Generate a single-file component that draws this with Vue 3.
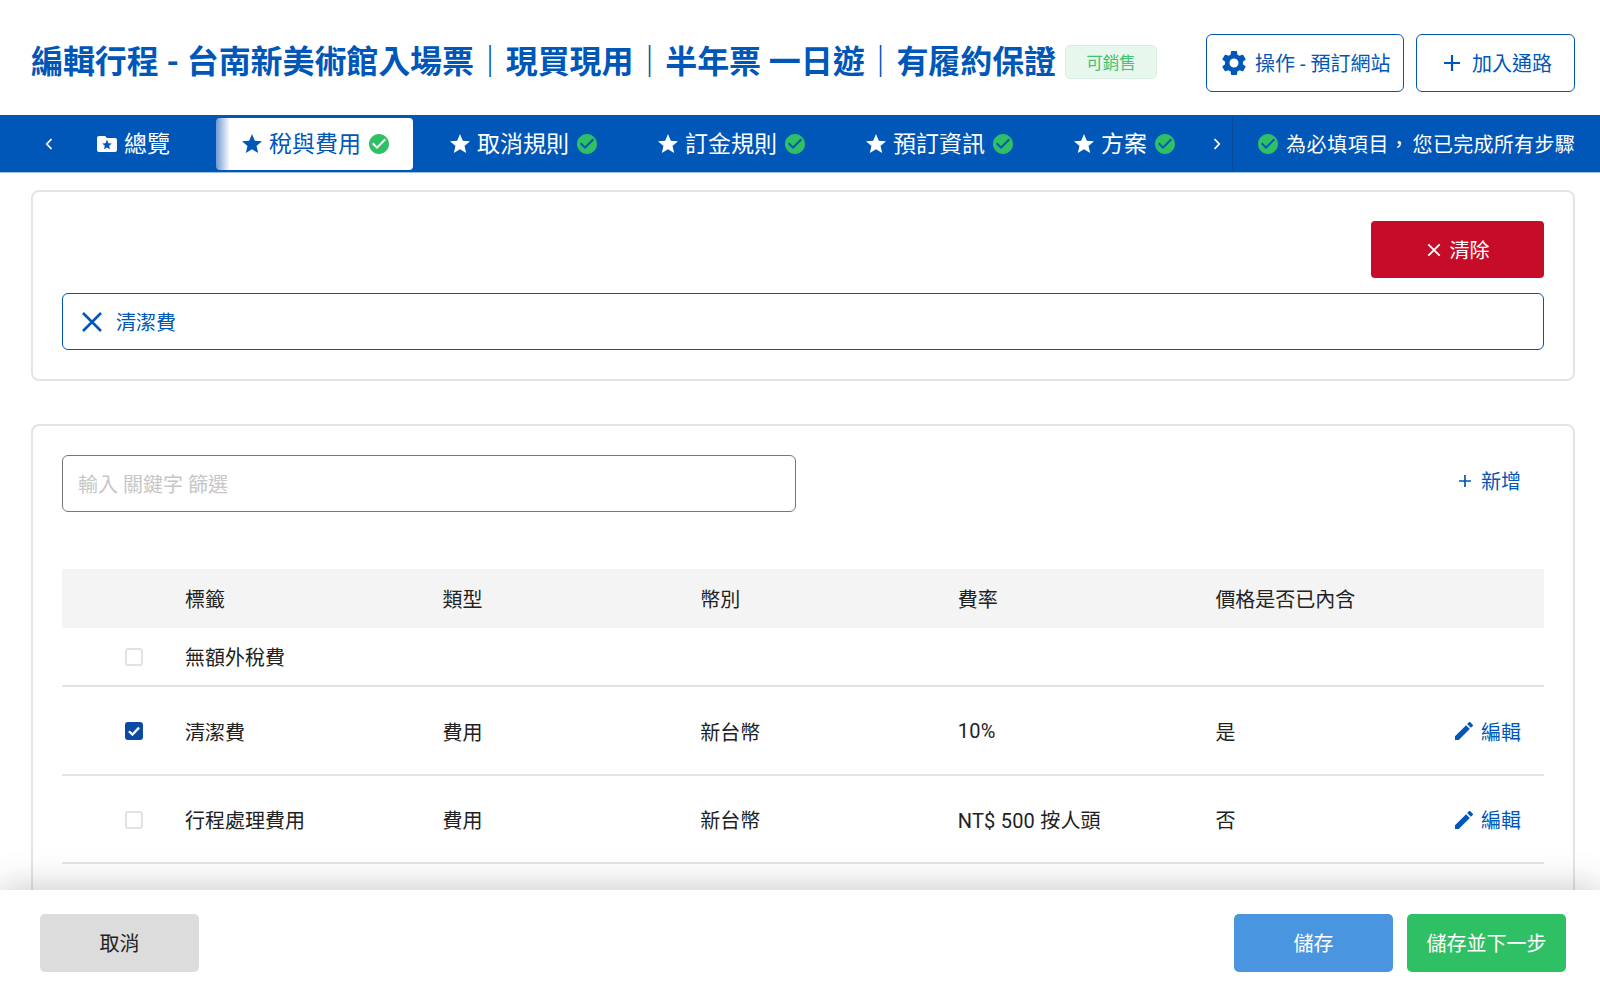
<script setup>
const tabs = ['取消規則', '訂金規則', '預訂資訊', '方案']
const rows = [
  { label: '無額外稅費', type: '', cur: '', rate: '', inc: '', checked: false, edit: false },
  { label: '清潔費', type: '費用', cur: '新台幣', rate: '10%', inc: '是', checked: true, edit: true },
  { label: '行程處理費用', type: '費用', cur: '新台幣', rate: 'NT$ 500 按人頭', inc: '否', checked: false, edit: true },
]
const star = 'M12 17.27 18.18 21l-1.64-7.03L22 9.24l-7.19-.61L12 2 9.19 8.63 2 9.24l5.46 4.73L5.82 21z'
const check = 'M12 2C6.48 2 2 6.48 2 12s4.48 10 10 10 10-4.48 10-10S17.52 2 12 2zm-2 15l-5-5 1.41-1.41L10 14.17l7.59-7.59L19 8l-9 9z'
const pencil = 'M3 17.25V21h3.75L17.81 9.94l-3.75-3.75L3 17.25zM20.71 7.04a1 1 0 0 0 0-1.41l-2.34-2.34a1 1 0 0 0-1.41 0l-1.83 1.83 3.75 3.75 1.83-1.83z'
</script>

<template>
  <div class="page">
    <header class="head">
      <h1 class="title">編輯行程 - 台南新美術館入場票｜現買現用｜半年票 一日遊｜有履約保證</h1>
      <span class="badge">可銷售</span>
      <div class="head-actions">
        <button class="outline op">
          <svg class="gear" viewBox="0 0 24 24"><path fill="currentColor" d="M19.14 12.94c.04-.3.06-.61.06-.94s-.02-.64-.07-.94l2.03-1.58a.49.49 0 0 0 .12-.61l-1.92-3.32a.49.49 0 0 0-.59-.22l-2.39.96a7 7 0 0 0-1.62-.94l-.36-2.54a.48.48 0 0 0-.48-.41h-3.84a.48.48 0 0 0-.47.41l-.36 2.54c-.59.24-1.13.57-1.62.94l-2.39-.96a.49.49 0 0 0-.59.22L2.74 8.87a.48.48 0 0 0 .12.61l2.03 1.58c-.05.3-.09.63-.09.94s.02.64.07.94l-2.03 1.58a.49.49 0 0 0-.12.61l1.92 3.32c.12.22.37.29.59.22l2.39-.96c.5.38 1.03.7 1.62.94l.36 2.54c.05.24.24.41.48.41h3.84c.24 0 .44-.17.47-.41l.36-2.54c.59-.24 1.13-.56 1.62-.94l2.39.96c.22.08.47 0 .59-.22l1.92-3.32a.48.48 0 0 0-.12-.61l-2.01-1.58zM12 15.6A3.6 3.6 0 1 1 12 8.4a3.6 3.6 0 0 1 0 7.2z"/></svg>
          <span>操作 - 預訂網站</span>
        </button>
        <button class="outline add">
          <svg class="plus" viewBox="0 0 20 20"><path d="M10 2v16M2 10h16" stroke="currentColor" stroke-width="2.2" fill="none"/></svg>
          <span>加入通路</span>
        </button>
      </div>
    </header>

    <nav class="nav">
      <div class="nav-tabs">
        <svg class="chev" viewBox="0 0 10 16"><path d="M7.5 3 2.8 8l4.7 5" fill="none" stroke="#fff" stroke-width="1.8"/></svg>
        <div class="tab overview">
          <svg class="ic folder" viewBox="0 0 24 24"><path fill="#fff" fill-rule="evenodd" d="M10 4H4a2 2 0 0 0-2 2v12a2 2 0 0 0 2 2h16a2 2 0 0 0 2-2V8a2 2 0 0 0-2-2h-8l-2-2zm5 13.2-3-1.8-3 1.8.8-3.4-2.6-2.2 3.4-.3L12 7.5l1.4 3.8 3.4.3-2.6 2.2.8 3.4z"/></svg>
          <span>總覽</span>
        </div>
        <div class="tab active">
          <svg class="ic" viewBox="0 0 24 24"><path fill="currentColor" :d="star"/></svg>
          <span>稅與費用</span>
          <svg class="ok" viewBox="2 2 20 20"><path fill="#2fbf64" :d="check"/></svg>
        </div>
        <div v-for="t in tabs" :key="t" class="tab">
          <svg class="ic" viewBox="0 0 24 24"><path fill="#fff" :d="star"/></svg>
          <span>{{ t }}</span>
          <svg class="ok" viewBox="2 2 20 20"><path fill="#2fbf64" :d="check"/></svg>
        </div>
        <svg class="chev next" viewBox="0 0 10 16"><path d="M2.5 3 7.2 8l-4.7 5" fill="none" stroke="#fff" stroke-width="1.8"/></svg>
      </div>
      <div class="nav-status">
        <svg class="ok" viewBox="2 2 20 20"><path fill="#2fbf64" :d="check"/></svg>
        <span class="st-a">為必填項目，</span><span class="st-b">您已完成所有步驟</span>
      </div>
    </nav>

    <main class="main">
      <section class="card top-card">
        <div class="clear-row">
          <button class="clear">
            <svg class="x-small" viewBox="0 0 14 14"><path d="M2 2l10 10M12 2 2 12" stroke="#fff" stroke-width="1.6" fill="none"/></svg>
            <span>清除</span>
          </button>
        </div>
        <div class="chip">
          <svg class="x-big" viewBox="0 0 22 22"><path d="M2 2l18 18M20 2 2 20" stroke="currentColor" stroke-width="2.6" fill="none"/></svg>
          <span>清潔費</span>
        </div>
      </section>

      <section class="card table-card">
        <div class="filter-row">
          <div class="filter">輸入 關鍵字 篩選</div>
          <div class="new">
            <svg class="plus-small" viewBox="0 0 14 14"><path d="M7 1v12M1 7h12" stroke="currentColor" stroke-width="1.7" fill="none"/></svg>
            <span>新增</span>
          </div>
        </div>
        <div class="thead">
          <div class="cb-cell"></div>
          <div>標籤</div><div>類型</div><div>幣別</div><div>費率</div><div>價格是否已內含</div>
        </div>
        <div v-for="(r, i) in rows" :key="r.label" class="row" :class="{ first: i === 0 }">
          <div class="cb-cell">
            <span class="cb" :class="{ on: r.checked }">
              <svg v-if="r.checked" viewBox="0 0 16 16"><path d="M3.5 8.2 6.6 11.2 12.5 5" fill="none" stroke="#fff" stroke-width="2"/></svg>
            </span>
          </div>
          <div>{{ r.label }}</div><div>{{ r.type }}</div><div>{{ r.cur }}</div><div class="rate">{{ r.rate }}</div><div>{{ r.inc }}</div>
          <div v-if="r.edit" class="edit">
            <svg viewBox="3 3 18 18"><path fill="currentColor" :d="pencil"/></svg>
            <span>編輯</span>
          </div>
        </div>
      </section>
    </main>

    <footer class="foot">
      <button class="fbtn cancel">取消</button>
      <div class="foot-right">
        <button class="fbtn save">儲存</button>
        <button class="fbtn next-btn">儲存並下一步</button>
      </div>
    </footer>
  </div>
</template>

<style>
html, body { margin: 0; background: #fff; }
</style>

<style scoped>
.page {
  width: 1600px; height: 995px; display: flex; flex-direction: column; overflow: hidden;
  font-family: Roboto, "Noto Sans CJK TC", sans-serif; color: #222; background: #fff; font-size: 20px;
}
button { font-family: inherit; cursor: pointer; }
.head { height: 115px; flex: none; display: flex; align-items: center; padding: 9px 25px 0 31px; box-sizing: border-box; }
.title { margin: 0; font-size: 32px; font-weight: 700; color: #0057b8; white-space: nowrap; line-height: 1.2; letter-spacing: -.1px; }
.badge {
  margin-left: 9px; width: 92px; height: 34px; box-sizing: border-box; display: flex; align-items: center; justify-content: center;
  font-size: 16.5px; color: #3ec46d; background: #e8f7ee; border: 1px solid #d6f0df; border-radius: 5px; flex: none;
}
.head-actions { margin-left: auto; display: flex; gap: 12px; padding-top: 2px; }
.outline {
  height: 58px; box-sizing: border-box; background: #fff; border: 1px solid #0057b8; border-radius: 6px; color: #0057b8;
  font-size: 20px; display: flex; align-items: center; padding: 0;
}
.outline span { margin-top: -2px; }
.op { width: 198px; padding-left: 12px; gap: 6px; }
.add { width: 159px; padding-left: 25px; gap: 10px; }
.gear { width: 30px; height: 30px; }
.plus { width: 20px; height: 20px; }

.nav { height: 58px; flex: none; background: #0057b8; color: #fff; display: flex; box-sizing: border-box; border-bottom: 1px solid #9ebfe4; }
.nav-tabs { width: 1233px; flex: none; display: flex; align-items: center; box-sizing: border-box; padding-left: 44px; border-right: 1px solid #0a4a97; }
.chev { width: 10px; height: 16px; flex: none; }
.chev.next { margin-left: 11px; }
.tab { height: 52px; padding: 0 0 0 25px; display: flex; align-items: center; font-size: 23px; white-space: nowrap; flex: none; margin-right: 11px; border-radius: 4px; box-sizing: border-box; width: 197px; }
.tab span { margin-top: -3px; }
.tab:last-of-type { width: 153px; margin-right: 0; }
.overview { width: auto; margin-left: 18px; margin-right: 22px; padding-right: 24px; padding-left: 24px; }
.active { background: linear-gradient(90deg, #6f9bd3 0, #fff 14px); color: #0057b8; }
.ic { width: 24px; height: 24px; margin-right: 5px; margin-left: -1px; flex: none; }
.folder { margin-right: 5px; }
.ok { width: 20px; height: 20px; margin-left: 8px; flex: none; }
.nav-status { flex: 1; display: flex; align-items: center; padding-left: 17px; white-space: nowrap; }
.nav-status .ok { margin-left: 8px; margin-right: 8px; }
.st-a { letter-spacing: .6px; margin-right: 3px; }
.st-b { letter-spacing: .3px; }

.main { flex: 1; min-height: 0; overflow: hidden; padding: 17px 25px 0 31px; box-sizing: border-box; }
.card { border: 2px solid #e4e4e4; border-radius: 8px; box-sizing: border-box; background: #fff; }
.top-card { height: 191px; padding: 29px 29px 0; margin-bottom: 43px; }
.clear-row { display: flex; justify-content: flex-end; margin-bottom: 15px; }
.clear {
  width: 173px; height: 57px; background: #c60c28; color: #fff; border: 0; border-radius: 4px; font-size: 20px;
  display: flex; align-items: center; justify-content: center; gap: 8px;
}
.x-small { width: 16px; height: 16px; }
.chip {
  height: 57px; box-sizing: border-box; border: 1px solid #0057b8; border-radius: 6px; display: flex; align-items: center;
  padding-left: 18px; gap: 13px; color: #0057b8;
}
.x-big { width: 22px; height: 22px; }
.table-card { height: 600px; padding: 29px 29px 0; }
.filter-row { display: flex; align-items: flex-start; justify-content: space-between; margin-bottom: 57px; }
.filter {
  width: 734px; height: 57px; box-sizing: border-box; border: 1px solid #777; border-radius: 6px; display: flex; align-items: center;
  padding-left: 15px; color: #c6c6c6; font-size: 20px;
}
.new { display: flex; align-items: center; gap: 9px; color: #0057b8; margin: 11px 23px 0 0; }
.plus-small { width: 14px; height: 14px; }
.thead, .row { display: grid; grid-template-columns: 123px repeat(5, 257.6px) 1fr; align-items: center; }
.thead { height: 59px; background: #f4f4f4; }
.row { height: 88.5px; padding-top: 2px; border-bottom: 2px solid #e4e4e4; box-sizing: border-box; position: relative; color: #222; }
.row.first { height: 59px; padding-top: 0; }
.cb-cell { display: flex; justify-content: flex-end; padding-right: 42px; }
.cb { width: 18px; height: 18px; box-sizing: border-box; border: 2px solid #e2e2e2; border-radius: 3px; display: block; }
.cb.on { background: #0b4aa2; border: 0; }
.cb svg { display: block; width: 18px; height: 18px; }
.rate { letter-spacing: .2px; }
.edit { position: absolute; right: 23px; display: flex; align-items: center; gap: 8px; color: #0057b8; padding-top: 2px; }
.edit svg { width: 18px; height: 18px; }

.foot {
  height: 105px; flex: none; background: #fff; display: flex; align-items: center; justify-content: space-between; padding: 0 34px 0 40px;
  box-sizing: border-box; position: relative; z-index: 2; box-shadow: 0 -2px 34px rgba(0,0,0,.22);
}
.foot-right { display: flex; gap: 14px; }
.fbtn { width: 159px; height: 58px; border: 0; border-radius: 5px; font-size: 20px; color: #fff; }
.cancel { background: #dcdcdc; color: #222; }
.save { background: #4a95e0; }
.next-btn { background: #2fbf64; }
</style>
